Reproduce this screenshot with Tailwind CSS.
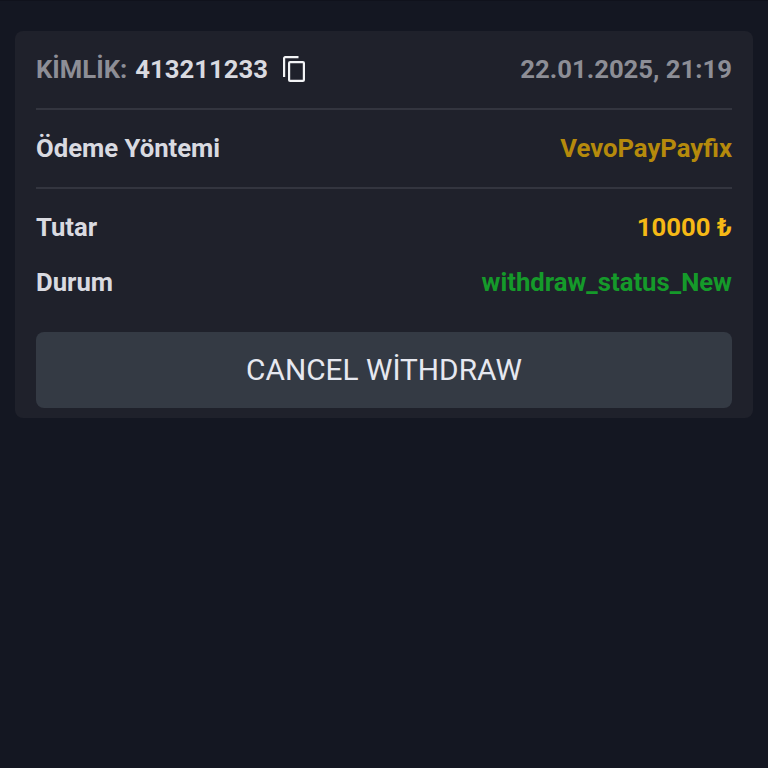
<!DOCTYPE html>
<html lang="en">
<head>
    <meta charset="UTF-8">
    <meta name="viewport" content="width=device-width, initial-scale=1.0">
    <title>Withdraw</title>
    <script src="https://cdn.jsdelivr.net/npm/@tailwindcss/browser@4"></script>
</head>
<body class="bg-[#141722] font-['Roboto',sans-serif] antialiased">
    <div class="h-[768px] px-[15px] pt-[30px] border-t border-[#10121c]">
        <div class="bg-[#1f212b] rounded-lg px-[21px] pb-[10px]">
            <!-- ID and date -->
            <div class="h-[79px] flex items-center justify-between border-b-2 border-[#33353f] font-bold text-[25.7px]">
                <div class="flex items-center">
                    <span class="text-[#8d8e96]">KİMLİK:</span>
                    <span class="ml-[8px] text-[#d9dae0]">413211233</span>
                    <svg class="ml-[15px]" width="22" height="26" viewBox="0 0 22 26" fill="none" stroke="#f2f3f5" stroke-width="2.2">
                        <path d="M15.5 1.1H2.2a1.1 1.1 0 0 0-1.1 1.1V21"/>
                        <rect x="6.1" y="6.1" width="14.8" height="18.8" rx="1"/>
                    </svg>
                </div>
                <span class="text-[#8d8e96]">22.01.2025, 21:19</span>
            </div>
            <div class="h-[79px] flex items-center justify-between border-b-2 border-[#33353f] font-bold text-[25.7px]">
                <span class="text-[#d9dae0]">Ödeme Yöntemi</span>
                <span class="text-[#b58a0c]">VevoPayPayfix</span>
            </div>
            <!-- Amount and status -->
            <div class="mt-[11px] h-[55px] flex items-center justify-between font-bold text-[25.7px]">
                <span class="text-[#d9dae0]">Tutar</span>
                <span class="text-[#f5b916]">10000 ₺</span>
            </div>
            <div class="h-[55px] flex items-center justify-between font-bold text-[25.7px]">
                <span class="text-[#d9dae0]">Durum</span>
                <span class="text-[#159a2a]">withdraw_status_New</span>
            </div>
            <button class="mt-[22px] w-full h-[76px] bg-[#343a44] rounded-lg text-[#e6e8f0] text-[29.8px]">CANCEL WİTHDRAW</button>
        </div>
    </div>
</body>
</html>
